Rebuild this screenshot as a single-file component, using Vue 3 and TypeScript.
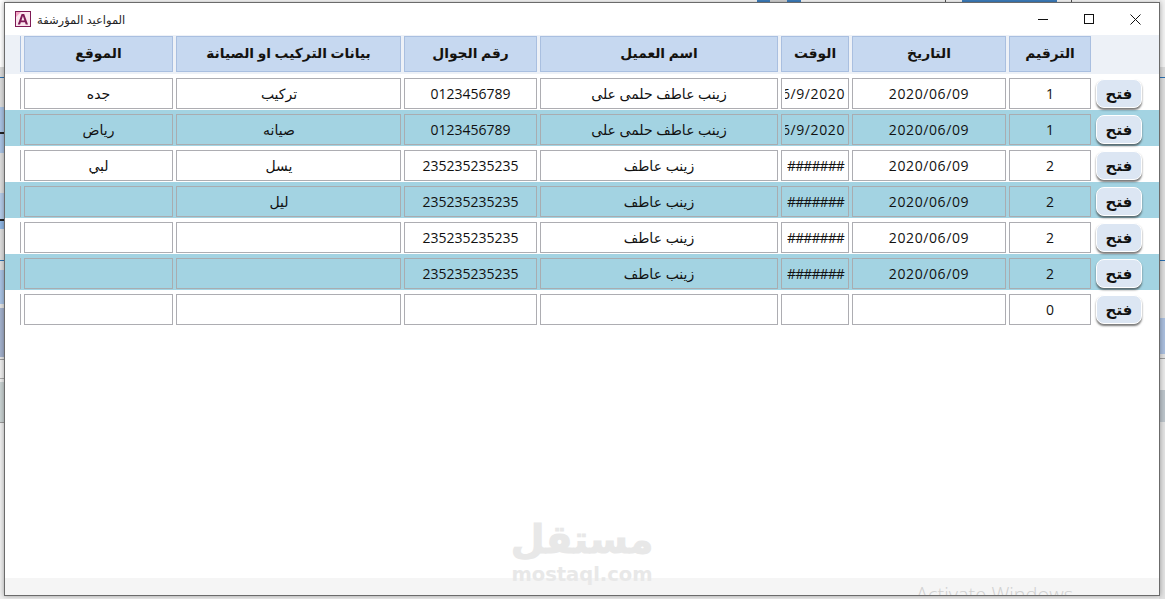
<script setup lang="ts">
interface Row {
  num: string
  date: string
  time: string
  client: string
  phone: string
  details: string
  place: string
}

const headers = ['الموقع', 'بيانات التركيب او الصيانة', 'رقم الجوال', 'اسم العميل', 'الوقت', 'التاريخ', 'الترقيم']

const rows: Row[] = [
  { num: '1', date: '2020/06/09', time: '6/9/2020', client: 'زينب عاطف حلمى على', phone: '0123456789', details: 'تركيب', place: 'جده' },
  { num: '1', date: '2020/06/09', time: '6/9/2020', client: 'زينب عاطف حلمى على', phone: '0123456789', details: 'صيانه', place: 'رياض' },
  { num: '2', date: '2020/06/09', time: '#######', client: 'زينب عاطف', phone: '235235235235', details: 'يسل', place: 'لبي' },
  { num: '2', date: '2020/06/09', time: '#######', client: 'زينب عاطف', phone: '235235235235', details: 'ليل', place: '' },
  { num: '2', date: '2020/06/09', time: '#######', client: 'زينب عاطف', phone: '235235235235', details: '', place: '' },
  { num: '2', date: '2020/06/09', time: '#######', client: 'زينب عاطف', phone: '235235235235', details: '', place: '' },
  { num: '0', date: '', time: '', client: '', phone: '', details: '', place: '' },
]
</script>

<template>
  <div class="desktop">
    <div class="window">
      <div class="titlebar">
        <div class="title-left">
          <svg class="app-icon" width="16" height="16" viewBox="0 0 16 16">
            <rect x="0.5" y="0.5" width="15" height="15" fill="#fbe6ee" stroke="#7e1a55" />
            <path d="M1 1H6L1 6Z" fill="#f3a6c4" />
            <path d="M2.8 13.5L6.6 3H9.2L13 13.5H10.7L10 11.3H5.8L5.1 13.5ZM6.4 9.4H9.4L7.9 5Z" fill="#7e1a55" fill-rule="evenodd" />
          </svg>
          <span class="title-text">المواعيد المؤرشفة</span>
        </div>
        <div class="win-controls">
          <svg width="11" height="11" viewBox="0 0 11 11"><path d="M0 5.5H10" stroke="#111" fill="none" /></svg>
          <svg width="11" height="11" viewBox="0 0 11 11"><rect x="0.5" y="0.5" width="9" height="9" stroke="#111" fill="none" /></svg>
          <svg width="11" height="11" viewBox="0 0 11 11"><path d="M0.5 0.5L10.5 10.5M10.5 0.5L0.5 10.5" stroke="#111" fill="none" /></svg>
        </div>
      </div>

      <div class="head-band">
        <div class="line-sliver head-sliver"></div>
        <div v-for="h in headers" :key="h" class="head-cell">{{ h }}</div>
      </div>

      <div class="rows">
        <div v-for="(row, i) in rows" :key="i" class="row" :class="{ alt: i % 2 === 1 }">
          <div class="line-sliver"></div>
          <div class="cell">{{ row.place }}</div>
          <div class="cell details">{{ row.details }}</div>
          <div class="cell">{{ row.phone }}</div>
          <div class="cell">{{ row.client }}</div>
          <div class="cell time"><span :class="{ hash: row.time.startsWith('#') }">{{ row.time }}</span></div>
          <div class="cell date">{{ row.date }}</div>
          <div class="cell">{{ row.num }}</div>
          <button class="open-btn" type="button">فتح</button>
        </div>
      </div>

      <div class="spacer"></div>
      <div class="footer-band"></div>

      <div class="watermark">
        <div class="wm-ar">مستقل</div>
        <div class="wm-en">mostaql.com</div>
      </div>
      <div class="activate">Activate Windows</div>
    </div>
  </div>
</template>

<style>
html, body { margin: 0; background: #fff; }
</style>

<style scoped>
.desktop {
  width: 1165px;
  height: 599px;
  overflow: hidden;
  padding: 2px 5px 3px 4px;
  box-sizing: border-box;
  /* bits of the windows behind, showing round the edge of the dialog */
  background:
    linear-gradient(180deg,
      #fff 0 67px, #d9d9d9 67px 77px, #2a6fb0 77px 78px, #dcdcdc 78px 107px,
      #a9c3e4 107px 132px, #222 132px 134px, #a9c3e4 134px 153px, #dedede 153px 193px,
      #b4cbe8 193px 219px, #222 219px 221px, #8fb6e4 221px 229px, #dedede 229px 260px,
      #2a6fb0 260px 261px, #dedede 261px 270px, #a9c3e4 270px 304px, #e4e4e4 304px 308px,
      #a3b1cc 308px 357px, #e6e6e6 357px 359px, #9a9a9a 359px 360px, #eee 360px 378px,
      #aaa 378px 379px, #eee 379px 382px, #c9d2d2 382px 422px, #9a9a9a 422px 423px, #efefef 423px
    ) left top / 4px 100% no-repeat,
    linear-gradient(180deg,
      #f1f1f1 0 67px, #d9d9d9 67px 77px, #2a6fb0 77px 78px, #dcdcdc 78px 260px,
      #2a6fb0 260px 261px, #dcdcdc 261px 318px, #a9bedd 318px 354px, #e0e0e0 354px 358px,
      #9a9a9a 358px 359px, #e8e8e8 359px 390px, #bcc4ca 390px 422px, #e2e2e2 422px
    ) right top / 6px 100% no-repeat,
    linear-gradient(90deg,
      #fff 0 757px, #3f82c4 757px 770px, #d8d8d8 770px 787px, #3f82c4 787px 801px,
      #fff 801px 945px, #555 945px 946px, #fff 946px 962px, #3f82c4 962px 1057px,
      #fff 1057px 1071px, #555 1071px 1072px, #fff 1072px
    ) left top / 100% 2px no-repeat,
    #eee;
  font-family: "Open Sans", "DejaVu Sans", sans-serif;
  color: #111;
}
.window {
  position: relative;
  height: 100%;
  box-sizing: border-box;
  display: flex;
  flex-direction: column;
  background: #fff;
  border: 1px solid #6b6b6b;
  box-shadow: 0 0 5px rgba(0, 0, 0, 0.35);
  overflow: hidden;
}
.titlebar {
  height: 32px;
  display: flex;
  justify-content: space-between;
  align-items: center;
  padding: 0 18px 0 10px;
}
.title-left { display: flex; align-items: center; gap: 6px; }
.title-text { font-size: 11.5px; direction: rtl; color: #222; }
.win-controls { display: flex; gap: 35px; align-items: center; }
.head-band, .row {
  display: grid;
  grid-template-columns: 1px 149px 225px 133px 238px 68px 154px 82px 46px;
  column-gap: 3px;
  padding-left: 15px;
}
.head-band {
  height: 39px;
  box-sizing: border-box;
  padding-top: 1px;
  padding-bottom: 2px;
  background: #edf1f7;
}
.head-cell {
  display: flex;
  align-items: center;
  justify-content: center;
  box-sizing: border-box;
  padding-bottom: 4px;
  background: #c6d8f0;
  border: 1px solid #a9bfe0;
  font-size: 13.8px;
  font-weight: 700;
  direction: rtl;
  color: #14120f;
}
.line-sliver { background: #adadb2; }
.head-sliver { background: #a9bfe0; }
.row {
  height: 36px;
  box-sizing: border-box;
  padding-top: 4px;
  padding-bottom: 1px;
}
.row.alt { background: #a3d3e2; }
.cell {
  display: flex;
  align-items: center;
  justify-content: center;
  box-sizing: border-box;
  height: 31px;
  border: 1px solid #adadb2;
  font-size: 14px;
  white-space: nowrap;
  direction: rtl;
  overflow: hidden;
}
.row.alt .cell { border-color: #a9acb0; }
.details { padding-right: 19px; }
.date { direction: ltr; letter-spacing: 0.6px; }
.time {
  direction: ltr;
  justify-content: flex-end;
  padding: 0 3px;
}
.time span {
  overflow: hidden;
  letter-spacing: 0.6px;
  flex: none;
  max-width: 60px;
  display: flex;
  justify-content: flex-end;
}
.time span.hash { letter-spacing: -0.9px; padding-right: 1px; }
.open-btn {
  margin: 1px 0 0 2px;
  width: 46px;
  height: 29px;
  padding: 0;
  background: #dce6f3;
  border: 1px solid #fff;
  border-radius: 8px;
  box-shadow: 0 2px 2px rgba(50, 50, 50, 0.65);
  font-family: "DejaVu Sans", sans-serif;
  font-size: 15px;
  font-weight: 700;
  color: #111;
}
.spacer { flex: 1; }
.footer-band { height: 17px; background: #f5f5f5; }
.watermark {
  position: absolute;
  left: 504px;
  top: 512px;
  width: 146px;
  text-align: center;
  color: #e8e8e8;
  font-family: "DejaVu Sans", sans-serif;
  font-weight: 700;
}
.wm-ar { font-size: 39px; line-height: 50px; -webkit-text-stroke: 1px #e8e8e8; }
.wm-en { font-size: 19.5px; line-height: 20px; }
.activate {
  position: absolute;
  left: 911px;
  top: 582px;
  font-size: 20px;
  line-height: 19px;
  font-weight: 300;
  color: #d0d0d0;
  white-space: nowrap;
}
</style>
